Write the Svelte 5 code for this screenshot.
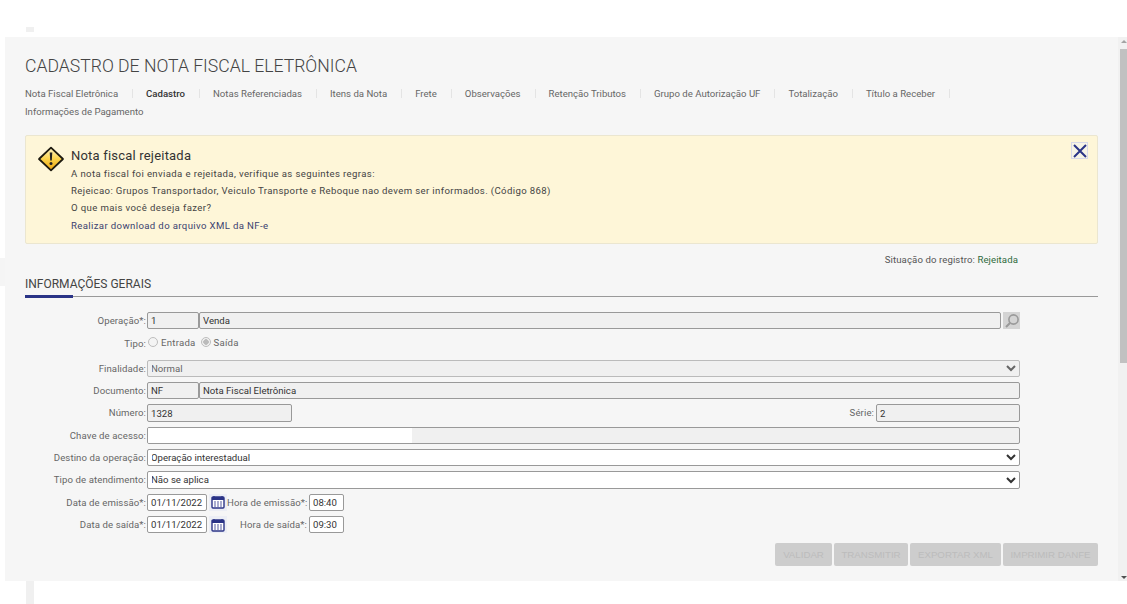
<script>
  const tabs = ['Nota Fiscal Eletrônica','Cadastro','Notas Referenciadas','Itens da Nota','Frete','Observações','Retenção Tributos','Grupo de Autorização UF','Totalização','Título a Receber','Informações de Pagamento'];
</script>

<div class="page">
  <div class="ghost top"></div>
  <div class="ghost side"></div>
  <div class="panel">
    <main class="content">
      <h1>CADASTRO DE NOTA FISCAL ELETRÔNICA</h1>
      <nav class="tabs">
        {#each tabs as t, i}
          <a class:active={i === 1} class:last={i === tabs.length - 1} href="#t">{t}</a>
        {/each}
      </nav>

      <section class="alert">
        <svg class="warn" width="28" height="26" viewBox="0 0 28 26">
          <defs><linearGradient id="wg" x1="0" y1="0" x2="0" y2="1"><stop offset="0" stop-color="#fff6c8"/><stop offset="0.5" stop-color="#fbd34a"/><stop offset="1" stop-color="#eea40e"/></linearGradient></defs>
          <path d="M14 1.6 L26 13 L14 24.4 L2 13 Z" fill="url(#wg)" stroke="#1d1a10" stroke-width="1.8" stroke-linejoin="round"/>
          <path d="M12.7 6.5h2.6l-.5 8h-1.6z" fill="#222"/>
          <circle cx="14" cy="17.4" r="1.5" fill="#222"/>
        </svg>
        <div class="msg">
          <h2>Nota fiscal rejeitada</h2>
          <p>A nota fiscal foi enviada e rejeitada, verifique as seguintes regras:</p>
          <p>Rejeicao: Grupos Transportador, Veiculo Transporte e Reboque nao devem ser informados. (Código 868)</p>
          <p>O que mais você deseja fazer?</p>
          <p><a href="#x">Realizar download do arquivo XML da NF-e</a></p>
        </div>
        <button class="close" aria-label="Fechar">
          <svg width="14" height="14" viewBox="0 0 14 14"><path d="M1 1 L13 13 M13 1 L1 13" stroke="#2b3487" stroke-width="2"/></svg>
        </button>
      </section>

      <div class="status">Situação do registro: <span>Rejeitada</span></div>

      <h3 class="section"><span>INFORMAÇÕES GERAIS</span></h3>

      <form class="form" onsubmit={(e) => e.preventDefault()}>
        <div class="row">
          <label for="op">Operação*:</label>
          <input id="op" class="ro code" value="1" readonly />
          <input class="ro grow" value="Venda" readonly />
          <button type="button" class="lookup" aria-label="Pesquisar">
            <svg width="16" height="16" viewBox="0 0 16 16"><circle cx="9.5" cy="6.5" r="4.6" fill="none" stroke="#9a9a9a" stroke-width="1.6"/><path d="M6 10 L2 14" stroke="#9a9a9a" stroke-width="2"/></svg>
          </button>
        </div>
        <div class="row radios">
          <span class="lbl tipo">Tipo:</span>
          <span class="radio"></span><span class="rl">Entrada</span>
          <span class="radio on"></span><span class="rl">Saída</span>
        </div>
        <div class="row">
          <label for="fin">Finalidade:</label>
          <select id="fin" class="grow sel dis" disabled><option>Normal</option></select>
        </div>
        <div class="row">
          <label for="doc">Documento:</label>
          <input id="doc" class="ro code" value="NF" readonly />
          <input class="ro grow" value="Nota Fiscal Eletrônica" readonly />
        </div>
        <div class="row">
          <label for="num">Número:</label>
          <input id="num" class="ro numero" value="1328" readonly />
          <span class="spacer"></span>
          <label class="auto" for="ser">Série:</label>
          <input id="ser" class="ro serie" value="2" readonly />
        </div>
        <div class="row">
          <label for="ch">Chave de acesso:</label>
          <div class="chave"><input id="ch" /><span></span></div>
        </div>
        <div class="row">
          <label for="dest">Destino da operação:</label>
          <select id="dest" class="grow sel"><option>Operação interestadual</option></select>
        </div>
        <div class="row">
          <label for="at">Tipo de atendimento:</label>
          <select id="at" class="grow sel"><option>Não se aplica</option></select>
        </div>
        {#each [['Data de emissão*:','Hora de emissão*:','08:40'],['Data de saída*:','Hora de saída*:','09:30']] as r}
          <div class="row">
            <label for={r[0]}>{r[0]}</label>
            <input id={r[0]} class="date" value="01/11/2022" />
            <button type="button" class="cal" aria-label="Calendário">
              <svg width="14" height="14" viewBox="0 0 14 14">
                <rect x="1" y="2" width="12" height="11" rx="1" fill="#fff" stroke="#2b3487" stroke-width="1.4"/>
                <rect x="1" y="2" width="12" height="3" fill="#2b3487"/>
                <path d="M3 1v2M11 1v2" stroke="#2b3487" stroke-width="1.2"/>
                <path d="M3.2 7h1.6M6.2 7h1.6M9.2 7h1.6M3.2 9h1.6M6.2 9h1.6M9.2 9h1.6M3.2 11h1.6M6.2 11h1.6M9.2 11h1.6" stroke="#2b3487" stroke-width="1.2"/>
              </svg>
            </button>
            <label class="hora" for={r[1]}>{r[1]}</label>
            <input id={r[1]} class="time" value={r[2]} />
          </div>
        {/each}
        <div class="actions">
          <button type="button" disabled class="b1">VALIDAR</button>
          <button type="button" disabled class="b2">TRANSMITIR</button>
          <button type="button" disabled class="b3">EXPORTAR XML</button>
          <button type="button" disabled class="b4">IMPRIMIR DANFE</button>
        </div>
      </form>
    </main>
    <div class="scrollbar">
      <i class="up"></i>
      <div class="thumb"></div>
      <i class="down"></i>
    </div>
  </div>
  <div class="ghost bottom"></div>
</div>

<style>
  :global(body) { margin: 0; background: #fff; }
  .page { position: relative; width: 1127px; height: 604px; overflow: hidden; padding-top: 37px; box-sizing: border-box; font-family: Roboto, "Liberation Sans", sans-serif; font-size: 9.6px; color: #555; }
  .ghost { position: absolute; }
  .ghost.top { left: 26px; top: 27px; width: 8px; height: 5px; background: #f0f0f0; }
  .ghost.side { left: 0; top: 258px; width: 5px; height: 28px; background: #f5f5f5; }
  .ghost.bottom { left: 26px; top: 581px; width: 8px; height: 23px; background: #f0f0f0; }
  .panel { margin-left: 5px; height: 544px; display: flex; background: #f6f6f6; }
  .content { flex: 1; padding: 0 20px; min-width: 0; }
  h1 { margin: 0; padding-top: 19px; font-size: 17.6px; font-weight: 300; line-height: 21px; color: #444; }
  .tabs { display: flex; flex-wrap: wrap; max-width: 1040px; margin-top: 7px; }
  .tabs a { padding: 0 14px 0 13px; border-right: 1px solid #e4e4e4; color: #666; text-decoration: none; height: 9px; line-height: 9px; margin: 5px 0 4px; }
  .tabs a:first-child, .tabs a.last { padding-left: 0; }
  .tabs a.last { border-right: 0; }
  .tabs a.active { color: #333; font-weight: 500; }
  .alert { position: relative; box-sizing: border-box; height: 109px; margin-top: 15px; display: flex; background: #fef6d8; border: 1px solid #ebe6d0; border-radius: 2px; padding: 10px 0 0 11px; }
  .warn { flex: none; margin: 0 6px 0 0; }
  .msg { color: #444; letter-spacing: .37px; }
  .msg h2 { margin: 0 0 -1px; font-size: 13px; font-weight: 400; line-height: 20px; letter-spacing: .2px; color: #333; }
  .msg p { margin: 0; line-height: 17.2px; }
  .msg a { color: #3b4270; text-decoration: none; }
  .close { position: absolute; right: 9px; top: 6px; width: 17px; height: 17px; padding: 0; border: 1px solid #d8d8e8; background: #f7f4e6; display: flex; align-items: center; justify-content: center; }
  .status { text-align: right; padding-right: 80px; margin-top: 10px; line-height: 12px; color: #555; letter-spacing: .1px; }
  .status span { color: #2f6b3d; }
  .section { margin: 8px 0 0; height: 23px; box-sizing: border-box; border-bottom: 1px solid #999; font-size: 12px; font-weight: 400; color: #444; position: relative; line-height: 20px; }
  .section span::after { content: ""; position: absolute; left: 0; bottom: -2px; width: 48px; height: 3px; background: #2b3487; }
  .form { margin-top: 15px; display: flex; flex-direction: column; gap: 5px; position: relative; }
  .row { display: flex; align-items: stretch; height: 17.3px; width: 995px; }
  .row label, .lbl { width: 121px; margin-right: 1px; flex: none; text-align: right; line-height: 17px; color: #666; white-space: nowrap; letter-spacing: .1px; }
  input, select { box-sizing: border-box; height: 100%; margin: 0; padding: 0 3px; border: 1px solid #999; border-radius: 2px; font: inherit; color: #333; background: #fff; outline: 0; min-width: 0; }
  .ro { background: #f0f0f0; }
  .code { width: 52px; }
  .grow { flex: 1; }
  .lookup { flex: none; width: 17px; height: 17px; margin-left: 2px; padding: 0; border: 0; background: #d4d4d4; display: flex; align-items: center; justify-content: center; }
  .row.radios { height: 20.5px; align-items: flex-start; color: #666; }
  .lbl.tipo { padding-top: 1px; }
  .radio { box-sizing: border-box; width: 10px; height: 10px; margin: 3px 3px 0 1px; border-radius: 50%; border: 1px solid #bdbdbd; background: #f4f4f4; }
  .radio.on { background: radial-gradient(circle, #bbb 0 2.5px, #f0f0f0 3px); margin-left: 5px; margin-right: 3px; }
  .rl { letter-spacing: .25px; line-height: 17px; }
  .sel { padding-left: 0; text-indent: -1px; }
  .dis { background: #f0f0f0; color: #666; border-color: #bbb; opacity: 1; }
  .numero { width: 145px; }
  .spacer { flex: 1; }
  .row label.auto { width: auto; margin-right: 2px; }
  .serie { width: 144px; }
  .chave { flex: 1; display: flex; border: 1px solid #999; border-radius: 2px; background: #f0f0f0; overflow: hidden; }
  .chave input { width: 264px; border: 0; border-radius: 0; }
  .date { width: 60px; }
  .cal { flex: none; width: 18px; height: 17.3px; margin-left: 2px; padding: 0; border: 0; background: #eceef5; display: flex; align-items: center; justify-content: center; }
  .row label.hora { width: 80px; margin-right: 2px; }
  .time { width: 35px; }
  .actions { display: flex; justify-content: flex-end; gap: 2px; margin-top: 4.5px; width: 1073px; }
  .actions button { height: 23px; padding: 0; border: 0; border-radius: 2px; background: #cdcdcd; color: #bcbcbc; font: 400 9.7px "Liberation Sans", Arial, sans-serif; }
  .b1 { width: 57px; } .b2 { width: 74px; } .b3 { width: 91px; } .b4 { width: 95px; }
  .scrollbar { position: relative; flex: none; width: 9px; background: #f1f1f1; }
  .thumb { position: absolute; left: 2px; right: 0; top: 12px; height: 314px; background: #c1c1c1; }
  .scrollbar i { position: absolute; right: 0; width: 0; height: 0; border-left: 3px solid transparent; border-right: 3px solid transparent; }
  .up { top: 3px; border-bottom: 3px solid #a3a3a3; }
  .down { bottom: 2px; border-top: 3px solid #505050; }
</style>
